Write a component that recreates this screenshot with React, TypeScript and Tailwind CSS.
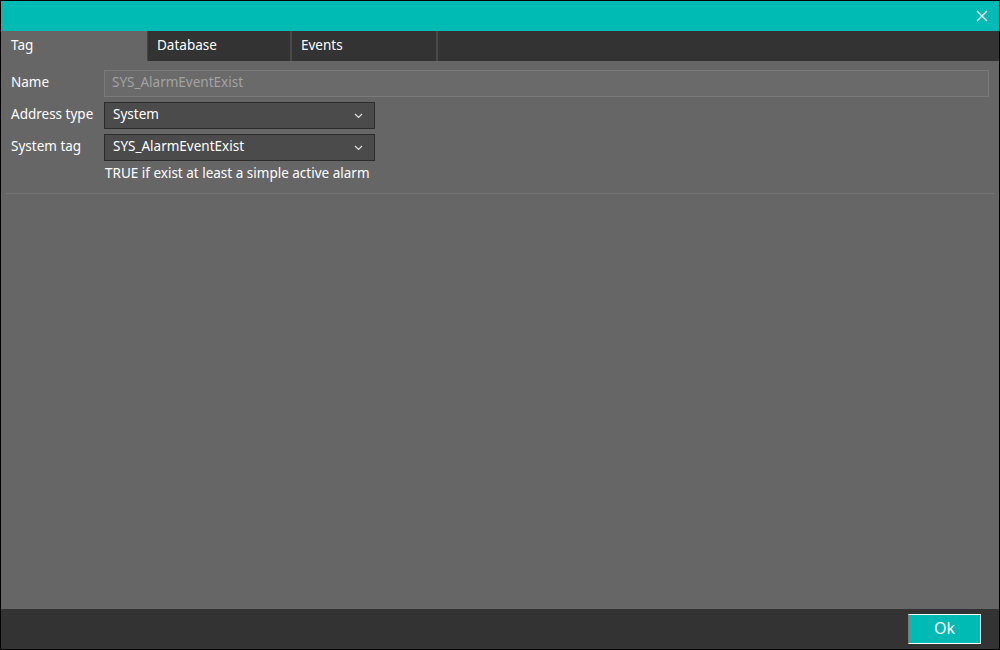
import React from "react";

function Chevron() {
  return (
    <svg width="9" height="6" viewBox="0 0 9 6" className="shrink-0">
      <path d="M1 1 L4.5 4.5 L8 1" stroke="#e0e0e0" strokeWidth="1.2" fill="none" />
    </svg>
  );
}

function Select({ value }: { value: string }) {
  return (
    <div className="flex h-[27px] w-[271px] items-center justify-between border border-[#2c2c2c] bg-[#4b4b4b] pl-[8px] pr-[11px] text-white">
      <span className="pb-[2px]">{value}</span>
      <Chevron />
    </div>
  );
}

export default function App() {
  return (
    <div
      className="flex h-[650px] w-[1000px] flex-col border border-black bg-[#666666] text-[13.5px] text-white"
      style={{ fontFamily: '"Segoe UI", "Noto Sans", "Open Sans", sans-serif' }}
    >
      <div className="flex h-[30px] shrink-0 items-center justify-end bg-[#00bbb4] pr-[11px]">
        <svg width="12" height="12" viewBox="0 0 12 12">
          <path d="M1 1 L11 11 M11 1 L1 11" stroke="white" strokeWidth="1.3" />
        </svg>
      </div>
      <div className="flex h-[30px] shrink-0 bg-[#333333]">
        <div className="flex w-[146px] items-center bg-[#666666] pb-[2px] pl-[10px]">Tag</div>
        <div className="flex w-[143px] items-center border-l border-[#444444] pb-[2px] pl-[9px]">Database</div>
        <div className="w-[2px] bg-[#4a4a4a]" />
        <div className="flex w-[144px] items-center pb-[2px] pl-[9px]">Events</div>
        <div className="w-[2px] bg-[#4a4a4a]" />
        <div className="flex-1" />
      </div>
      <div className="flex flex-1 flex-col">
        <div className="flex flex-col px-[10px] pt-[9px]">
          <div className="flex items-center">
            <div className="w-[93px] pb-[2px]">Name</div>
            <div className="flex h-[27px] flex-1 items-center border border-[#7a7a7a] bg-[#6a6a6a] pb-[2px] pl-[7px] text-[#a3a3a3]">
              SYS_AlarmEventExist
            </div>
          </div>
          <div className="mt-[5px] flex items-center">
            <div className="w-[93px] pb-[2px]">Address type</div>
            <Select value="System" />
          </div>
          <div className="mt-[5px] flex items-center">
            <div className="w-[93px] pb-[2px]">System tag</div>
            <Select value="SYS_AlarmEventExist" />
          </div>
          <div className="mt-[2px] pl-[94px]">TRUE if exist at least a simple active alarm</div>
        </div>
        <div className="mx-[5px] mt-[10px] h-px bg-[#747474]" />
      </div>
      <div className="flex h-[40px] shrink-0 items-center justify-end bg-[#333333] pr-[18px]">
        <div className="flex h-[30px] w-[73px] items-center justify-center border border-white border-l-[#777777] bg-[#00bbb4] pb-[2px] text-[16px]">
          Ok
        </div>
      </div>
    </div>
  );
}
